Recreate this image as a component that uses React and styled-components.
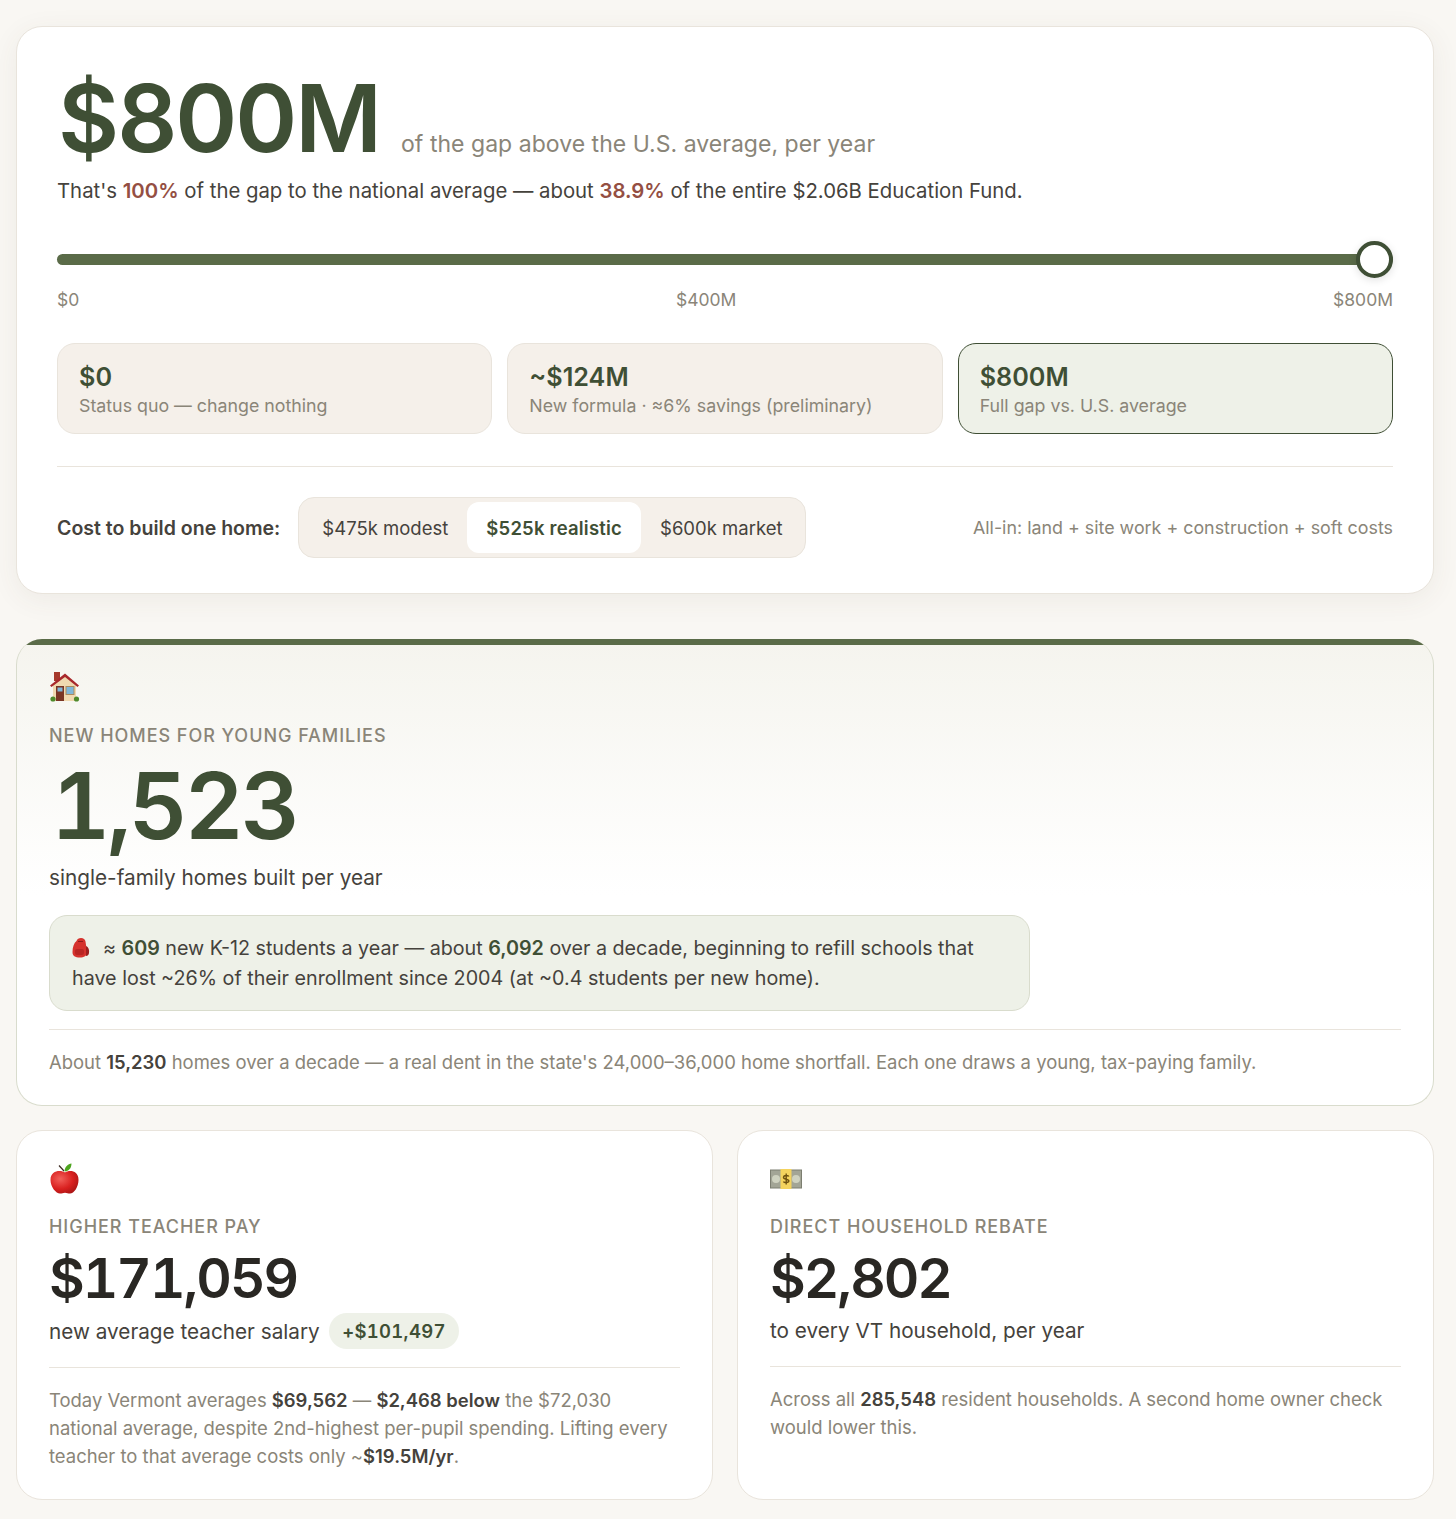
import React from 'react';
import styled, { createGlobalStyle } from 'styled-components';

const colors = {
    page: '#f9f7f3',
    line: '#e9e4dc',
    sand: '#f5f0ea',
    forest: '#3f4f35',
    moss: '#5a6b48',
    sage: '#eef1e8',
    sageLine: '#d9dccd',
    ink: '#292723',
    body: '#45423c',
    muted: '#8a8578',
    rust: '#944f43',
};

const GlobalStyle = createGlobalStyle`
    body {
        margin: 0;
        background: ${colors.page};
        font-family: Inter, "Liberation Sans", sans-serif;
        color: ${colors.ink};
    }
`;

const HouseIcon = () => (
    <svg width='32' height='32' viewBox='0 0 32 32'>
        <rect x='5' y='0' width='6' height='9' fill='#a5392b' />
        <path d='M4 13 L16 3 L27 13 V29 H4 Z' fill='#f0d9b0' />
        <path d='M1 13.5 L16 1.5 L30 13.5 L28.5 15 L16 5 L2.5 15 Z' fill='#a8292c' />
        <rect x='7' y='14' width='8' height='15' fill='#7a3524' />
        <rect x='8.5' y='15.5' width='5' height='4' fill='#7fb6d8' />
        <rect x='17' y='14.5' width='8' height='8' fill='#7fb6d8' stroke='#a98a5e' />
        <circle cx='4' cy='27' r='2.6' fill='#4e8a2c' />
        <circle cx='27.5' cy='27' r='2.6' fill='#4e8a2c' />
    </svg>
);

const BackpackIcon = () => (
    <svg width='18' height='20' viewBox='0 0 18 20'>
        <path d='M4.5 3 C5 1 7 0 9 0 C11.5 0 13 1.5 13.5 3.5 L15 14 C15 18 12 19.5 8 19.5 C3 19.5 0.5 18 0.5 14 C0.5 9 2 5 4.5 3 Z' fill='#d5322d' />
        <path d='M14 8 C16.5 9 17.5 12 17 15 C16.8 17 15.5 18 14 18 Z' fill='#9c1f1f' />
        <rect x='3' y='11' width='9' height='6' rx='2' fill='#b92523' />
        <path d='M6 3.5 H11' stroke='#8e1a1a' strokeWidth='1' />
    </svg>
);

const AppleIcon = () => (
    <svg width='32' height='32' viewBox='0 0 32 32'>
        <defs>
            <radialGradient id='appleFill' cx='0.35' cy='0.35' r='0.75'>
                <stop offset='0' stopColor='#f2605a' />
                <stop offset='0.6' stopColor='#d9201f' />
                <stop offset='1' stopColor='#a81414' />
            </radialGradient>
        </defs>
        <path d='M16 9.5 C20 7 29.5 7 29.5 17 C29.5 24 25 30.5 21 30.5 C19 30.5 18 29.7 16 29.7 C14 29.7 13 30.5 11 30.5 C7 30.5 1.5 24 1.5 17 C1.5 7 12 7 16 9.5 Z' fill='url(#appleFill)' />
        <path d='M10 2.5 L15 8' stroke='#3c2a20' strokeWidth='1.2' />
        <path d='M15.5 8.5 C15.5 4 19 1 22.5 0.5 C22.5 5 20 8 15.5 8.5 Z' fill='#4da51f' />
    </svg>
);

const MoneyIcon = () => (
    <svg width='32' height='20' viewBox='0 0 32 20'>
        <rect x='0.5' y='1' width='31' height='18' fill='#a3a596' stroke='#7c7e70' />
        <circle cx='6' cy='10' r='4' fill='#cfd2c0' />
        <circle cx='26' cy='10' r='4' fill='#cfd2c0' />
        <rect x='10.5' y='0' width='11' height='20' fill='#f4d35e' />
        <path d='M18.8 7.5 C18.3 6 13.5 6 13.5 8.5 C13.5 11 18.8 9.5 18.8 12 C18.8 14 14 14 13.5 12.5 M16.2 4.5 V15.5' stroke='#6f5210' strokeWidth='1.4' fill='none' />
    </svg>
);

const App = () => (
    <Page>
        <GlobalStyle />
        <TopCard>
            <Headline>
                <BigAmount>$800M</BigAmount>
                <HeadlineNote>of the gap above the U.S. average, per year</HeadlineNote>
            </Headline>
            <Summary>
                That's <Hot>100%</Hot> of the gap to the national average — about <Hot>38.9%</Hot> of the entire $2.06B Education Fund.
            </Summary>

            <Slider>
                <Track />
                <Thumb />
            </Slider>
            <Ticks>
                <span>$0</span>
                <span>$400M</span>
                <span>$800M</span>
            </Ticks>

            <Presets>
                <Preset>
                    <PresetValue>$0</PresetValue>
                    <PresetLabel>Status quo — change nothing</PresetLabel>
                </Preset>
                <Preset>
                    <PresetValue>~$124M</PresetValue>
                    <PresetLabel>New formula · ≈6% savings (preliminary)</PresetLabel>
                </Preset>
                <Preset $active>
                    <PresetValue>$800M</PresetValue>
                    <PresetLabel>Full gap vs. U.S. average</PresetLabel>
                </Preset>
            </Presets>

            <CostRow>
                <CostLabel>Cost to build one home:</CostLabel>
                <Segments>
                    <Segment>$475k modest</Segment>
                    <Segment $active>$525k realistic</Segment>
                    <Segment>$600k market</Segment>
                </Segments>
                <CostNote>All-in: land + site work + construction + soft costs</CostNote>
            </CostRow>
        </TopCard>

        <HomesCard>
            <EmojiSlot><HouseIcon /></EmojiSlot>
            <Eyebrow>New homes for young families</Eyebrow>
            <HomesNumber>1,523</HomesNumber>
            <HomesSub>single-family homes built per year</HomesSub>
            <Callout>
                <BackpackSlot><BackpackIcon /></BackpackSlot>≈ <b>609</b> new K-12 students a year — about <b>6,092</b> over a decade, beginning to refill schools that have lost ~26% of their enrollment since 2004 (at ~0.4 students per new home).
            </Callout>
            <Footnote>
                About <b>15,230</b> homes over a decade — a real dent in the state's 24,000–36,000 home shortfall. Each one draws a young, tax-paying family.
            </Footnote>
        </HomesCard>

        <Columns>
            <SmallCard>
                <EmojiSlot><AppleIcon /></EmojiSlot>
                <Eyebrow>Higher teacher pay</Eyebrow>
                <StatNumber>$171,059</StatNumber>
                <StatSub>
                    new average teacher salary
                    <Pill>+$101,497</Pill>
                </StatSub>
                <SmallNote>
                    Today Vermont averages <b>$69,562</b> — <b>$2,468 below</b> the $72,030 national average, despite 2nd-highest per-pupil spending. Lifting every teacher to that average costs only ~<b>$19.5M/yr</b>.
                </SmallNote>
            </SmallCard>
            <SmallCard>
                <EmojiSlot><MoneyIcon /></EmojiSlot>
                <Eyebrow>Direct household rebate</Eyebrow>
                <StatNumber>$2,802</StatNumber>
                <StatSub>to every VT household, per year</StatSub>
                <SmallNote>
                    Across all <b>285,548</b> resident households. A second home owner check would lower this.
                </SmallNote>
            </SmallCard>
        </Columns>
    </Page>
);

export default App;

const Page = styled.div`
    display: flex;
    flex-direction: column;
    padding: 26px 22px 19px 16px;
`;

const TopCard = styled.section`
    box-sizing: border-box;
    height: 568px;
    padding: 43px 40px 0;
    background: #fff;
    border: 1px solid ${colors.line};
    border-radius: 26px;
    box-shadow: 0 6px 28px rgba(80, 70, 50, 0.07);
`;

const Headline = styled.div`
    display: flex;
    align-items: baseline;
    gap: 21px;
    height: 96px;
`;

const BigAmount = styled.div`
    margin-left: 1px;
    font-size: 94px;
    line-height: 96px;
    font-weight: 600;
    letter-spacing: -2px;
    color: ${colors.forest};
`;

const HeadlineNote = styled.div`
    font-size: 23px;
    letter-spacing: 0.03px;
    color: ${colors.muted};
`;

const Summary = styled.div`
    margin-top: 10px;
    font-size: 20.33px;
    line-height: 30px;
    color: ${colors.body};
`;

const Hot = styled.b`
    font-weight: 600;
    color: ${colors.rust};
`;

const Slider = styled.div`
    position: relative;
    height: 37px;
    margin-top: 35px;
    display: flex;
    align-items: center;
`;

const Track = styled.div`
    width: 100%;
    height: 11px;
    border-radius: 6px;
    background: ${colors.moss};
`;

const Thumb = styled.div`
    position: absolute;
    right: 0;
    top: 0;
    box-sizing: border-box;
    width: 37px;
    height: 37px;
    border: 4px solid ${colors.forest};
    border-radius: 50%;
    background: #fff;
    box-shadow: 0 2px 8px rgba(0, 0, 0, 0.12);
`;

const Ticks = styled.div`
    display: flex;
    justify-content: space-between;
    margin-top: 10px;
    font-size: 17.5px;
    line-height: 24px;
    color: ${colors.muted};
`;

const Presets = styled.div`
    display: grid;
    grid-template-columns: repeat(3, 1fr);
    gap: 15px;
    margin-top: 31px;
`;

const Preset = styled.div`
    box-sizing: border-box;
    height: 91px;
    padding: 18px 21px;
    border: 1px solid ${(props) => (props.$active ? colors.forest : colors.line)};
    border-radius: 18px;
    background: ${(props) => (props.$active ? colors.sage : colors.sand)};
`;

const PresetValue = styled.div`
    font-size: 25.2px;
    line-height: 30px;
    font-weight: 600;
    color: ${colors.forest};
`;

const PresetLabel = styled.div`
    font-size: 17.8px;
    line-height: 28px;
    color: ${colors.muted};
`;

const CostRow = styled.div`
    display: flex;
    align-items: center;
    gap: 18px;
    margin-top: 32px;
    padding-top: 30px;
    border-top: 1px solid ${colors.line};
`;

const CostLabel = styled.div`
    font-size: 19.55px;
    font-weight: 600;
    color: ${colors.body};
`;

const Segments = styled.div`
    display: flex;
    box-sizing: border-box;
    height: 61px;
    padding: 4px;
    border: 1px solid ${colors.line};
    border-radius: 16px;
    background: ${colors.sand};
`;

const Segment = styled.div`
    display: flex;
    align-items: center;
    padding: 0 19px;
    border-radius: 12px;
    font-size: 18.5px;
    letter-spacing: ${(props) => (props.$active ? '0.2px' : '0')};
    font-weight: ${(props) => (props.$active ? 600 : 400)};
    color: ${(props) => (props.$active ? colors.forest : colors.body)};
    background: ${(props) => (props.$active ? '#fff' : 'transparent')};
`;

const CostNote = styled.div`
    margin-left: auto;
    font-size: 17.85px;
    color: ${colors.muted};
`;

const HomesCard = styled.section`
    position: relative;
    overflow: hidden;
    box-sizing: border-box;
    height: 467px;
    margin-top: 45px;
    padding: 33px 32px 0;
    border: 1px solid ${colors.sageLine};
    border-top: 0;
    border-radius: 26px;
    background: linear-gradient(180deg, #f5f4ee 0%, #ffffff 55%);

    &::before {
        content: '';
        position: absolute;
        top: 0;
        left: 0;
        right: 0;
        height: 6px;
        background: ${colors.moss};
    }
`;

const EmojiSlot = styled.div`
    display: flex;
    align-items: center;
    height: 32px;
`;

const Eyebrow = styled.div`
    margin-top: 19px;
    font-size: 18px;
    line-height: 26px;
    font-weight: 500;
    letter-spacing: 0.96px;
    text-transform: uppercase;
    color: ${colors.muted};
`;

const HomesNumber = styled.div`
    margin: 7px 0 0 2px;
    font-size: 92px;
    line-height: 100px;
    font-weight: 600;
    font-variant-numeric: tabular-nums;
    letter-spacing: -3.4px;
    color: ${colors.forest};
`;

const HomesSub = styled.div`
    margin-top: 6px;
    font-size: 20.76px;
    line-height: 32px;
    color: ${colors.body};
`;

const Callout = styled.div`
    box-sizing: border-box;
    width: 981px;
    margin-top: 21px;
    padding: 16.5px 22px;
    border: 1px solid ${colors.sageLine};
    border-radius: 18px;
    background: ${colors.sage};
    font-size: 19.72px;
    line-height: 30.5px;
    color: ${colors.body};

    b {
        font-weight: 600;
        color: ${colors.forest};
    }
`;

const BackpackSlot = styled.span`
    display: inline-block;
    width: 31px;
    vertical-align: -3px;

    svg {
        display: block;
    }
`;

const Footnote = styled.div`
    margin-top: 18px;
    padding-top: 18px;
    border-top: 1px solid ${colors.line};
    font-size: 18.46px;
    line-height: 28px;
    color: ${colors.muted};

    b {
        font-weight: 600;
        color: ${colors.body};
    }
`;

const Columns = styled.div`
    display: grid;
    grid-template-columns: 1fr 1fr;
    gap: 24px;
    margin-top: 24px;
`;

const SmallCard = styled.section`
    box-sizing: border-box;
    height: 370px;
    padding: 32px 32px 0;
    background: #fff;
    border: 1px solid ${colors.line};
    border-radius: 26px;
`;

const StatNumber = styled.div`
    margin-top: 4px;
    font-size: 55px;
    line-height: 69px;
    font-weight: 600;
    font-variant-numeric: tabular-nums;
    letter-spacing: -2px;
    color: ${colors.ink};
`;

const StatSub = styled.div`
    display: flex;
    align-items: center;
    gap: 9px;
    line-height: 35px;
    font-size: 20.72px;
    color: ${colors.body};
`;

const Pill = styled.span`
    padding: 0 13.5px;
    line-height: 36px;
    border-radius: 18px;
    background: ${colors.sage};
    font-size: 18.5px;
    font-weight: 600;
    font-variant-numeric: tabular-nums;
    letter-spacing: 0.3px;
    color: ${colors.forest};
`;

const SmallNote = styled.div`
    margin-top: 18px;
    padding-top: 18px;
    border-top: 1px solid ${colors.line};
    font-size: 18.47px;
    line-height: 28px;
    color: ${colors.muted};

    b {
        font-weight: 600;
        color: ${colors.body};
    }
`;
